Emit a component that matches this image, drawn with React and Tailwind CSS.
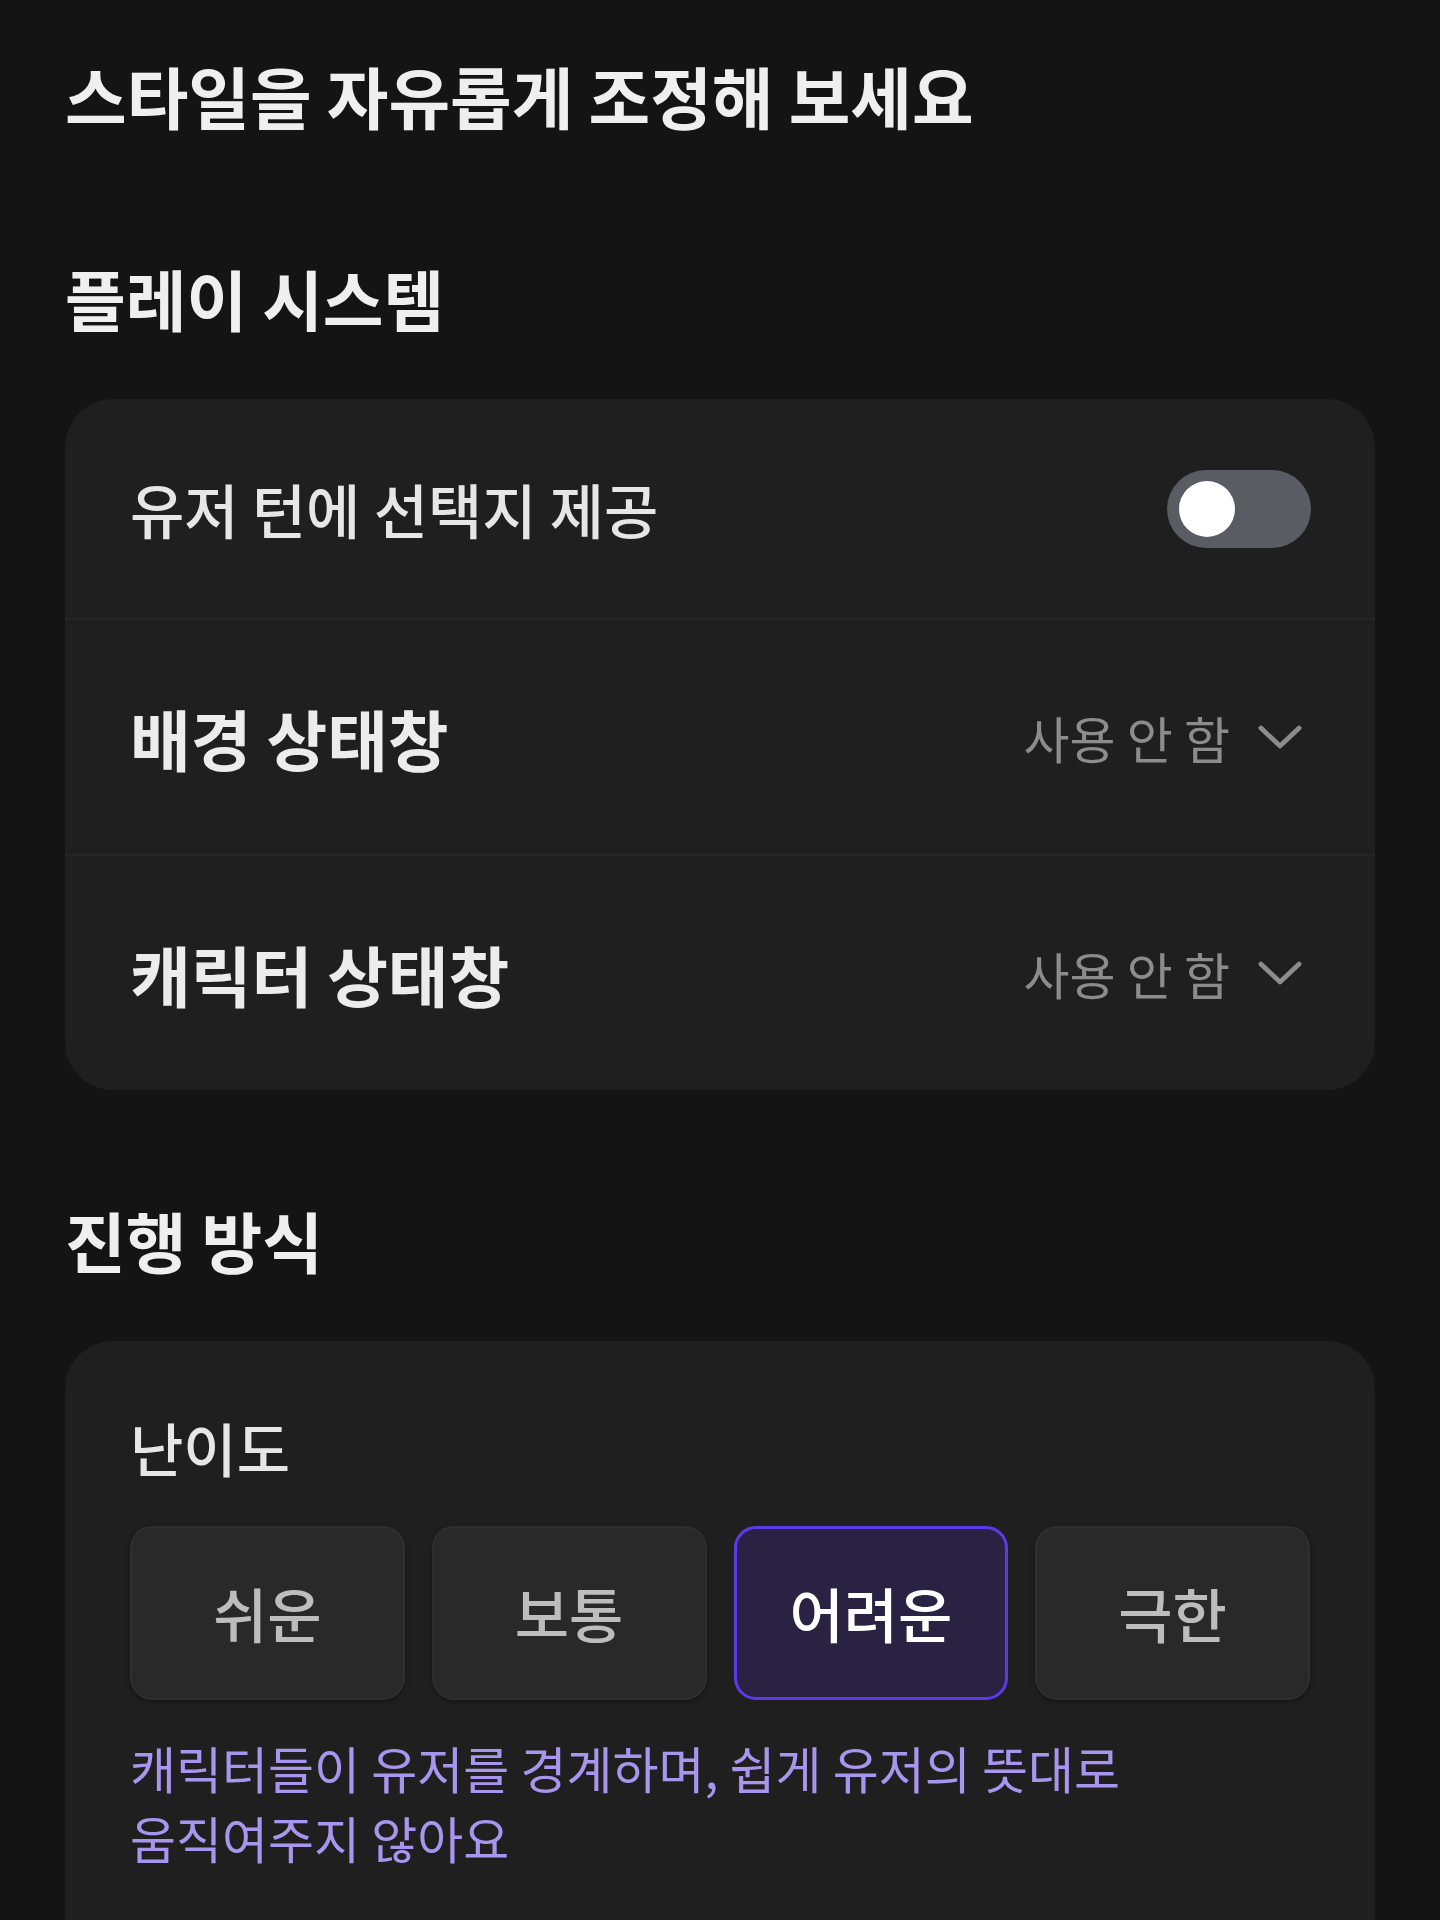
import React from 'react';

const font = { fontFamily: '"Noto Sans CJK KR", "Noto Sans", sans-serif' };

const Chevron = () => (
    <svg width="54" height="54" viewBox="0 0 24 24" fill="none" stroke="#8c8c8c" strokeWidth="2.1" strokeLinecap="round" strokeLinejoin="round">
        <path d="M3.5 8l8.5 8 8.5-8" />
    </svg>
);

const SelectRow = ({ label }) => (
    <div className="flex h-[236px] items-center justify-between border-t-2 border-[#262626] pl-[65px] pr-[68px]">
        <span className="text-[66px] font-bold leading-none text-[#ececec]">{label}</span>
        <div className="flex items-center gap-[23px]">
            <span className="text-[50px] leading-none text-[#8c8c8c]">사용 안 함</span>
            <Chevron />
        </div>
    </div>
);

const levels = ['쉬운', '보통', '어려운', '극한'];

export default function App() {
    const selected = 2;
    return (
        <div className="min-h-[1920px] bg-[#141414] px-[65px] pt-[52px]" style={font}>
            <h1 className="text-[67px] font-bold leading-[86px] text-[#efefef]">스타일을 자유롭게 조정해 보세요</h1>

            <h2 className="mt-[120px] text-[66px] font-bold leading-[78px] text-[#efefef]">플레이 시스템</h2>
            <div className="mt-[63px] overflow-hidden rounded-[48px] bg-[#1f1f1f]">
                <div className="flex h-[219px] items-center justify-between pl-[65px] pr-[64px]">
                    <span className="text-[59px] font-medium leading-none text-[#e6e6e6]">유저 턴에 선택지 제공</span>
                    <div className="flex h-[78px] w-[144px] items-center rounded-full bg-[#595c62] px-[12px]">
                        <div className="h-[56px] w-[56px] rounded-full bg-white" />
                    </div>
                </div>
                <SelectRow label="배경 상태창" />
                <SelectRow label="캐릭터 상태창" />
            </div>

            <h2 className="mt-[110px] text-[66px] font-bold leading-[78px] text-[#efefef]">진행 방식</h2>
            <div className="mt-[63px] rounded-t-[48px] bg-[#1f1f1f] px-[65px] pt-[71px] pb-[80px]">
                <div className="text-[58px] font-medium leading-[70px] text-[#e6e6e6]">난이도</div>
                <div className="mt-[44px] grid grid-cols-4 gap-[27px]">
                    {levels.map((l, i) => (
                        <button
                            key={l}
                            className={
                                i === selected
                                    ? 'flex h-[174px] items-center justify-center rounded-[22px] border-[3px] border-[#5b3be8] bg-[#2a2242] text-[59px] font-medium text-white'
                                    : 'flex h-[174px] items-center justify-center rounded-[22px] border-2 border-[#2f2f2f] bg-[#292929] text-[59px] font-medium text-[#bdbdbd] shadow-[0_2px_4px_rgba(0,0,0,0.35)]'
                            }
                        >
                            {l}
                        </button>
                    ))}
                </div>
                <p className="mt-[32px] text-[50px] leading-[70px] text-[#a796ee]">
                    캐릭터들이 유저를 경계하며, 쉽게 유저의 뜻대로<br />움직여주지 않아요
                </p>
            </div>
        </div>
    );
}
